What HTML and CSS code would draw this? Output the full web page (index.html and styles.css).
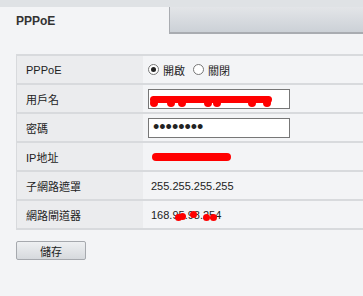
FILE: index.html
```html
<!DOCTYPE html>
<html lang="zh-Hant">
<head>
  <meta charset="UTF-8">
  <meta name="viewport" content="width=device-width, initial-scale=1.0">
  <title>PPPoE</title>
  <link rel="stylesheet" href="styles.css">
</head>
<body>

  <div class="topbar"></div>

  <!-- Tabs -->
  <div class="tabs">
    <div class="tab active">PPPoE</div>
    <div class="tab"></div>
  </div>

  <!-- Settings -->
  <div class="content">
    <table class="form">
      <tr>
        <td class="label">PPPoE</td>
        <td class="value">
          <label class="radio"><span class="dot on"></span>開啟</label>
          <label class="radio"><span class="dot"></span>關閉</label>
        </td>
      </tr>
      <tr>
        <td class="label">用戶名</td>
        <td class="value">
          <div class="field">
            <span class="mark user-mark"><i></i><i></i><i></i><i></i><i></i><i></i><i></i></span>
          </div>
        </td>
      </tr>
      <tr>
        <td class="label">密碼</td>
        <td class="value"><div class="field pass">••••••••</div></td>
      </tr>
      <tr>
        <td class="label">IP地址</td>
        <td class="value"><span class="mark ip-mark"></span></td>
      </tr>
      <tr>
        <td class="label">子網路遮罩</td>
        <td class="value text">255.255.255.255</td>
      </tr>
      <tr>
        <td class="label">網路閘道器</td>
        <td class="value text">
          <span class="gw">168.95.98.254<i class="b1"></i><i class="b2"></i><i class="b3"></i><i class="b4"></i><i class="b5"></i></span>
        </td>
      </tr>
    </table>

    <button class="save">儲存</button>
  </div>

</body>
</html>
```

FILE: styles.css
```css
body {
  margin: 0;
  background: #f3f4f6;
  font-family: "Liberation Sans", "Noto Sans CJK TC", sans-serif;
  font-size: 11px;
  color: #222;
  overflow: hidden;
}
.topbar {
  height: 7px;
  background: #dfe2e5;
}
.tabs {
  display: flex;
  height: 27px;
}
.tab {
  flex: 1;
  background: linear-gradient(#e3e5e8, #ccd1d7);
  border-left: 1px solid #a9acb1;
  border-bottom: 2px solid #a9acb1;
}
.tab.active {
  flex: 0 0 153px;
  padding-left: 16px;
  background: #f3f4f6;
  border: none;
  font-size: 12px;
  font-weight: bold;
  color: #333;
  line-height: 28px;
}
.content {
  padding: 20px 0 0 16px;
}
.form {
  width: 420px;
  border-collapse: collapse;
  border-top: 2px solid #d8dadd;
  border-left: 1px solid #d8dadd;
}
.form td {
  height: 27px;
  padding: 0;
  border-bottom: 2px solid #d8dadd;
}
.label {
  width: 117px;
  padding-left: 9px !important;
  background: #ebecee;
}
.value {
  padding-left: 5px !important;
  background: #f3f4f6;
}
.value.text {
  padding-left: 8px !important;
}
.radio {
  display: inline-flex;
  align-items: center;
  margin-right: 5px;
}
.dot {
  width: 11px;
  height: 11px;
  margin-right: 4px;
  border: 1px solid #777;
  border-radius: 50%;
  background: #fff;
  box-sizing: border-box;
  position: relative;
}
.dot.on::after {
  content: "";
  position: absolute;
  left: 2px;
  top: 2px;
  width: 5px;
  height: 5px;
  border-radius: 50%;
  background: #222;
}
.field {
  width: 140px;
  height: 18px;
  border: 1px solid #777;
  background: #fff;
  position: relative;
}
.pass {
  width: 136px;
  padding-left: 4px;
  font-size: 18px;
  line-height: 17px;
  color: #222;
}
.mark {
  display: block;
  background: #f00;
}
.user-mark {
  position: absolute;
  left: 1px;
  top: 6px;
  width: 122px;
  height: 7px;
  border-radius: 4px;
}
.user-mark i {
  position: absolute;
  top: 3px;
  width: 8px;
  height: 8px;
  border-radius: 50%;
  background: #f00;
}
.user-mark i:nth-child(1) { left: 0; }
.user-mark i:nth-child(2) { left: 17px; }
.user-mark i:nth-child(3) { left: 28px; }
.user-mark i:nth-child(4) { left: 54px; }
.user-mark i:nth-child(5) { left: 63px; }
.user-mark i:nth-child(6) { left: 98px; }
.user-mark i:nth-child(7) { left: 113px; }
.ip-mark {
  width: 79px;
  height: 8px;
  margin-left: 4px;
  border-radius: 4px;
}
.gw {
  position: relative;
}
.gw i {
  position: absolute;
  width: 7px;
  height: 7px;
  border-radius: 50%;
  background: #f00;
}
.gw .b1 { left: 24px; top: 5px; }
.gw .b2 { left: 28px; top: 4px; }
.gw .b3 { left: 39px; top: 2px; }
.gw .b4 { left: 52px; top: 5px; }
.gw .b5 { left: 59px; top: 5px; }
.save {
  display: block;
  width: 70px;
  height: 19px;
  margin-top: 11px;
  padding: 0;
  font-family: "Liberation Sans", "Noto Sans CJK TC", sans-serif;
  font-size: 11px;
  color: #222;
  border: 1px solid #a6a9ae;
  border-radius: 2px;
  background: linear-gradient(#eef0f2, #d6d9dd);
}
```
